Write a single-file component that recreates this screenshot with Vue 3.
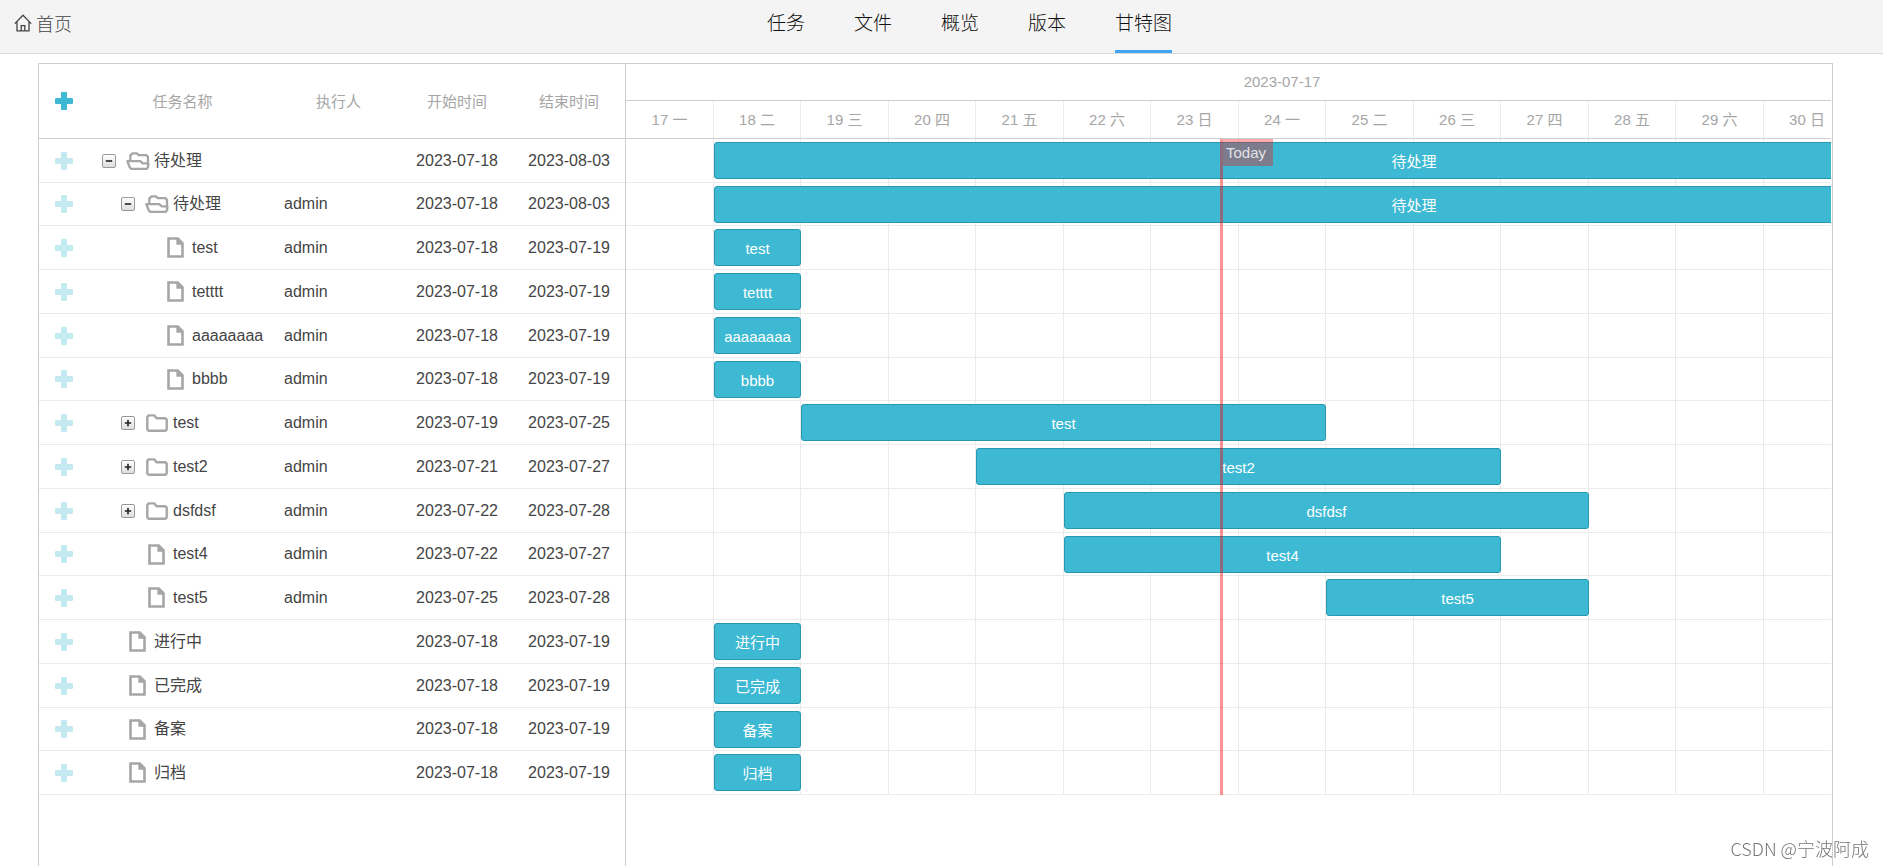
<script setup>
const navItems = [
  { label: '任务' },
  { label: '文件' },
  { label: '概览' },
  { label: '版本' },
  { label: '甘特图', active: true },
]

const weekdays = ['一', '二', '三', '四', '五', '六', '日']
const days = Array.from({ length: 14 }, (_, i) => `${17 + i} ${weekdays[i % 7]}`)

// from / to are day offsets counted from 2023-07-17
const tasks = [
  { name: '待处理', user: '', level: 0, icon: 'open', start: '2023-07-18', end: '2023-08-03', from: 1, to: 17 },
  { name: '待处理', user: 'admin', level: 1, icon: 'open', start: '2023-07-18', end: '2023-08-03', from: 1, to: 17 },
  { name: 'test', user: 'admin', level: 2, icon: 'file', start: '2023-07-18', end: '2023-07-19', from: 1, to: 2 },
  { name: 'tetttt', user: 'admin', level: 2, icon: 'file', start: '2023-07-18', end: '2023-07-19', from: 1, to: 2 },
  { name: 'aaaaaaaa', user: 'admin', level: 2, icon: 'file', start: '2023-07-18', end: '2023-07-19', from: 1, to: 2 },
  { name: 'bbbb', user: 'admin', level: 2, icon: 'file', start: '2023-07-18', end: '2023-07-19', from: 1, to: 2 },
  { name: 'test', user: 'admin', level: 1, icon: 'closed', start: '2023-07-19', end: '2023-07-25', from: 2, to: 8 },
  { name: 'test2', user: 'admin', level: 1, icon: 'closed', start: '2023-07-21', end: '2023-07-27', from: 4, to: 10 },
  { name: 'dsfdsf', user: 'admin', level: 1, icon: 'closed', start: '2023-07-22', end: '2023-07-28', from: 5, to: 11 },
  { name: 'test4', user: 'admin', level: 1, icon: 'file', start: '2023-07-22', end: '2023-07-27', from: 5, to: 10 },
  { name: 'test5', user: 'admin', level: 1, icon: 'file', start: '2023-07-25', end: '2023-07-28', from: 8, to: 11 },
  { name: '进行中', user: '', level: 0, icon: 'file', start: '2023-07-18', end: '2023-07-19', from: 1, to: 2 },
  { name: '已完成', user: '', level: 0, icon: 'file', start: '2023-07-18', end: '2023-07-19', from: 1, to: 2 },
  { name: '备案', user: '', level: 0, icon: 'file', start: '2023-07-18', end: '2023-07-19', from: 1, to: 2 },
  { name: '归档', user: '', level: 0, icon: 'file', start: '2023-07-18', end: '2023-07-19', from: 1, to: 2 },
]

// two days take 175px: 88 + 87
const dayX = (d) => Math.ceil((d * 175) / 2)
const barStyle = (t) => ({
  marginLeft: dayX(t.from) + 'px',
  width: dayX(t.to) - dayX(t.from) + 'px',
})
</script>

<template>
  <div class="page">
    <header class="topbar">
      <a class="home" href="#">
        <svg width="18" height="18" viewBox="0 0 18 18" fill="none" stroke="currentColor" stroke-width="1.3">
          <path d="M0.8 9.6 9 1.2l8.2 8.4M3 7.6v9.2h12V7.6M7.2 16.8v-5.2h3.6v5.2" />
        </svg>
        <span>首页</span>
      </a>
      <nav class="tabs">
        <a v-for="n in navItems" :key="n.label" href="#" :class="{ active: n.active }">{{ n.label }}</a>
      </nav>
    </header>

    <main class="content">
      <div class="gantt">
        <div class="tree">
          <table>
            <colgroup>
              <col class="c-add" /><col class="c-name" /><col class="c-user" /><col class="c-date" /><col class="c-date" />
            </colgroup>
            <thead>
              <tr>
                <th>
                  <button class="add strong" aria-label="添加任务">
                    <svg width="18" height="18" viewBox="0 0 18 18"><path d="M7 0h4a1 1 0 0 1 1 1v5h5a1 1 0 0 1 1 1v4a1 1 0 0 1-1 1h-5v5a1 1 0 0 1-1 1H7a1 1 0 0 1-1-1v-5H1a1 1 0 0 1-1-1V7a1 1 0 0 1 1-1h5V1a1 1 0 0 1 1-1z" /></svg>
                  </button>
                </th>
                <th><span>任务名称</span></th>
                <th><span>执行人</span></th>
                <th><span>开始时间</span></th>
                <th><span>结束时间</span></th>
              </tr>
            </thead>
            <tbody>
              <tr v-for="(t, i) in tasks" :key="i">
                <td>
                  <button class="add" aria-label="添加子任务">
                    <svg width="18" height="18" viewBox="0 0 18 18"><path d="M7 0h4a1 1 0 0 1 1 1v5h5a1 1 0 0 1 1 1v4a1 1 0 0 1-1 1h-5v5a1 1 0 0 1-1 1H7a1 1 0 0 1-1-1v-5H1a1 1 0 0 1-1-1V7a1 1 0 0 1 1-1h5V1a1 1 0 0 1 1-1z" /></svg>
                  </button>
                </td>
                <td>
                  <div class="name">
                    <span v-for="n in t.level" :key="n" class="indent"></span>
                    <span class="toggle-slot">
                      <button v-if="t.icon !== 'file'" class="toggle" :aria-label="t.icon === 'open' ? '折叠' : '展开'">
                        <svg width="8" height="8" viewBox="0 0 8 8" stroke="#222" stroke-width="1.6">
                          <path v-if="t.icon === 'open'" d="M0.8 4h6.4" />
                          <path v-else d="M0.8 4h6.4M4 0.8v6.4" />
                        </svg>
                      </button>
                    </span>
                    <span class="icon-slot">
                      <svg v-if="t.icon === 'open'" width="24" height="18" viewBox="0 0 24 18" fill="none" stroke="#a6a6a6" stroke-width="2.3" stroke-linejoin="round">
                        <path d="M4.3 8.6V3.6l2.2-2.2h4.4l1.8 1.8h7.6l1.7 1.6v9" />
                        <path d="M1.4 9.2h12.9l2.5 2.2h5.4v3.4l-1.4 2H5L3.6 15z" />
                      </svg>
                      <svg v-else-if="t.icon === 'closed'" width="22" height="18" viewBox="0 0 22 18" fill="none" stroke="#a6a6a6" stroke-width="2.4" stroke-linejoin="round">
                        <path d="M1.3 15.4V2.8l1.4-1.4h5.5l2.4 2.8h8.6l1.5 1.2v10.2l-1.4 1.2H2.6z" />
                      </svg>
                      <svg v-else width="17" height="21" viewBox="0 0 17 21" fill="none" stroke="#a6a6a6" stroke-width="2.6">
                        <path d="M1.5 1.5h9.3l4.7 4.7v13.3H1.5z" />
                        <path d="M9.4 1.5h1.8l4.6 5v1.3H9.4z" fill="#a6a6a6" stroke="none" />
                      </svg>
                    </span>
                    <span>{{ t.name }}</span>
                  </div>
                </td>
                <td class="user">{{ t.user }}</td>
                <td class="date">{{ t.start }}</td>
                <td class="date">{{ t.end }}</td>
              </tr>
            </tbody>
          </table>
        </div>

        <div class="timeline">
          <div class="scale-week">2023-07-17</div>
          <div class="scale-days">
            <div v-for="d in days" :key="d" class="day">{{ d }}</div>
          </div>
          <div class="bars">
            <div v-for="(t, i) in tasks" :key="i" class="row">
              <div class="bar" :style="barStyle(t)">{{ t.name }}</div>
            </div>
            <div class="today"><span>Today</span></div>
          </div>
        </div>
      </div>
    </main>
    <div class="watermark">CSDN @宁波阿成</div>
  </div>
</template>

<style>
body {
  margin: 0;
  background: #fff;
}
</style>

<style scoped>
.page,
.page * {
  box-sizing: border-box;
}
.page {
  display: flex;
  flex-direction: column;
  min-height: 100vh;
  font-family: 'Liberation Sans', 'Noto Sans CJK SC', sans-serif;
  font-weight: 400;
  font-size: 16px;
  color: #454545;
}
.topbar {
  position: relative;
  display: flex;
  justify-content: center;
  height: 54px;
  padding-left: 56px;
  background: #f4f4f4;
  border-bottom: 1px solid #d8d8d8;
}
a {
  color: inherit;
  text-decoration: none;
}
.home {
  position: absolute;
  left: 14px;
  top: 0;
  display: flex;
  align-items: center;
  gap: 4px;
  height: 45px;
  font-size: 18px;
  font-weight: 300;
  color: #444;
}
.tabs {
  display: flex;
  gap: 49px;
  font-size: 19px;
  font-weight: 300;
  line-height: 48px;
  color: #111;
}
.tabs a {
  height: 53px;
  white-space: nowrap;
}
.tabs a.active {
  border-bottom: 3px solid #3fa4f5;
}
.content {
  flex: 1;
  display: flex;
  padding: 9px 50px 0 38px;
}
.gantt {
  flex: 1;
  min-width: 0;
  display: flex;
  border: 1px solid #cecece;
  border-bottom: 0;
}
.tree {
  flex: none;
  border-right: 1px solid #cecece;
}
table {
  table-layout: fixed;
  width: 586px;
  border-collapse: separate;
  border-spacing: 0;
}
.c-add { width: 50px; }
.c-name { width: 187px; }
.c-user { width: 125px; }
.c-date { width: 112px; }
th,
td {
  padding: 0;
  font-weight: 400;
  white-space: nowrap;
}
th {
  height: 75px;
  font-size: 15px;
  color: #a6a6a6;
  text-align: center;
  border-bottom: 1px solid #cecece;
}
th span {
  display: block;
  padding-bottom: 2px;
}
td {
  height: 44px;
  line-height: 20px;
  border-bottom: 1px solid #ebebeb;
}
tbody tr:nth-child(4n + 2) td,
.row:nth-child(4n + 2) {
  height: 43px;
}
.user {
  padding-left: 8px;
}
.date {
  text-align: center;
}
button {
  padding: 0;
  border: 0;
  background: none;
  cursor: pointer;
}
.add {
  display: block;
  width: 18px;
  height: 18px;
  margin: 0 auto;
  opacity: 0.3;
}
.add.strong {
  opacity: 1;
}
.add svg {
  display: block;
  fill: #3db9d3;
}
.name {
  display: flex;
  align-items: center;
  padding-left: 8px;
}
.indent {
  width: 19px;
}
.toggle-slot,
.icon-slot {
  display: flex;
  align-items: center;
  justify-content: center;
  width: 24px;
}
.icon-slot {
  width: 33px;
}
.toggle {
  display: flex;
  align-items: center;
  justify-content: center;
  width: 14px;
  height: 14px;
  border: 1px solid #999;
  border-radius: 2px;
  background: linear-gradient(#fff, #ddd);
}
.toggle svg {
  flex: none;
}
.timeline {
  flex: 1;
  min-width: 0;
  margin-right: 1px;
  overflow: hidden;
  font-size: 15px;
}
.scale-week {
  width: 1312px;
  height: 37px;
  line-height: 36px;
  text-align: center;
  color: #a6a6a6;
  border-bottom: 1px solid #cecece;
}
.scale-days {
  display: flex;
  width: 1312px;
  height: 38px;
  line-height: 37px;
  color: #a6a6a6;
  border-bottom: 1px solid #cecece;
}
.day {
  flex: none;
  width: 88px;
  text-align: center;
  border-right: 1px solid #ebebeb;
}
.day:nth-child(even) {
  width: 87px;
}
.bars {
  position: relative;
  background: repeating-linear-gradient(
    to right,
    transparent 0 87px,
    #ebebeb 87px 88px,
    transparent 88px 174px,
    #ebebeb 174px 175px
  );
}
.row {
  display: flex;
  align-items: flex-start;
  height: 44px;
  padding-top: 3px;
  border-bottom: 1px solid #ebebeb;
}
.bar {
  flex: none;
  height: 37px;
  line-height: 37px;
  text-align: center;
  color: #fff;
  white-space: nowrap;
  background: #3db9d3;
  border: 1px solid #2898b0;
  border-radius: 3px;
}
.today {
  position: absolute;
  top: 0;
  bottom: 0;
  left: 594px;
  width: 3px;
  background: rgba(255, 0, 0, 0.42);
}
.today span {
  position: absolute;
  top: 0;
  left: 3px;
  padding: 0 7px 0 3px;
  line-height: 27px;
  color: rgba(255, 255, 255, 0.8);
  background: rgba(255, 0, 0, 0.33);
}
.watermark {
  position: fixed;
  right: 14px;
  bottom: 5px;
  font-family: 'Noto Sans CJK SC', sans-serif;
  font-size: 18px;
  font-weight: 300;
  color: #777;
  text-shadow: -1px -1px 0 #fff;
}
</style>
